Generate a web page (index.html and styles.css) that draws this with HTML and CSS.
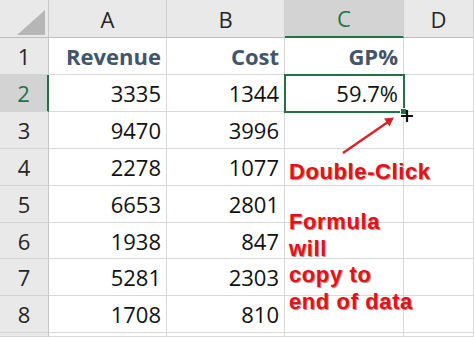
FILE: index.html
```html
<!DOCTYPE html>
<html>
<head>
<meta charset="utf-8">
<link rel="stylesheet" href="styles.css">
</head>
<body>
<div class="sheet">
  <div class="grid">
    <div class="corner"><svg class="tri" width="49" height="38" viewBox="0 0 49 38"><polygon points="17,35 45,35 45,10" fill="#b6b6b6"/></svg></div>
    <div class="colhead">A</div>
    <div class="colhead">B</div>
    <div class="colhead sel">C</div>
    <div class="colhead">D</div>

    <div class="rowhead">1</div>
    <div class="cell title">Revenue</div>
    <div class="cell title">Cost</div>
    <div class="cell title">GP%</div>
    <div class="cell"></div>

    <div class="rowhead sel">2</div>
    <div class="cell">3335</div>
    <div class="cell">1344</div>
    <div class="cell active">59.7%<span class="handle"></span></div>
    <div class="cell"></div>

    <div class="rowhead">3</div>
    <div class="cell">9470</div>
    <div class="cell">3996</div>
    <div class="cell"></div>
    <div class="cell"></div>

    <div class="rowhead">4</div>
    <div class="cell">2278</div>
    <div class="cell">1077</div>
    <div class="cell"></div>
    <div class="cell"></div>

    <div class="rowhead">5</div>
    <div class="cell">6653</div>
    <div class="cell">2801</div>
    <div class="cell"></div>
    <div class="cell"></div>

    <div class="rowhead">6</div>
    <div class="cell">1938</div>
    <div class="cell">847</div>
    <div class="cell"></div>
    <div class="cell"></div>

    <div class="rowhead">7</div>
    <div class="cell">5281</div>
    <div class="cell">2303</div>
    <div class="cell"></div>
    <div class="cell"></div>

    <div class="rowhead">8</div>
    <div class="cell">1708</div>
    <div class="cell">810</div>
    <div class="cell"></div>
    <div class="cell"></div>

    <div class="rowhead"></div>
    <div class="cell"></div>
    <div class="cell"></div>
    <div class="cell"></div>
    <div class="cell"></div>
  </div>

  <svg class="plus" width="12" height="12" viewBox="0 0 12 12"><path d="M6 0V12M0 6H12" stroke="#111" stroke-width="2.2"/></svg>
  <svg class="arrow" width="474" height="337" viewBox="0 0 474 337"><line x1="343" y1="153" x2="388" y2="122" stroke="#d8222a" stroke-width="2.4"/><polygon points="394,117.5 384,118.5 389.5,126.5" fill="#d8222a"/></svg>
  <div class="note note1">Double-Click</div>
  <div class="note note2">Formula<br>will<br>copy to<br>end of data</div>
</div>
</body>
</html>
```

FILE: styles.css
```css
html, body {
  margin: 0;
  padding: 0;
  background: #ffffff;
}

.sheet {
  position: relative;
  width: 474px;
  height: 337px;
  overflow: hidden;
  font-family: "Open Sans", "Liberation Sans", sans-serif;
  font-size: 22px;
  color: #111;
}

.grid {
  display: grid;
  grid-template-columns: 49px 118px 118px 119px 1fr;
  grid-template-rows: 38px 37px 37px 37px 37px 37px 36px 37px 37px 1fr;
  height: 337px;
}

.corner {
  background: #e9e9e9;
  border-right: 1px solid #c9c9c9;
  border-bottom: 1px solid #bdbdbd;
  box-sizing: border-box;
  position: relative;
}

.tri {
  position: absolute;
  left: 0;
  top: 0;
}

.colhead {
  background: #e9e9e9;
  border-right: 1px solid #d0d0d0;
  border-bottom: 1px solid #bdbdbd;
  box-sizing: border-box;
  display: flex;
  align-items: center;
  justify-content: center;
  color: #262626;
}

.colhead.sel {
  background: #d3d3d3;
  color: #217346;
  border-bottom: 2px solid #217346;
}

.rowhead {
  background: #e9e9e9;
  border-right: 1px solid #c6c6c6;
  border-bottom: 1px solid #d4d4d4;
  box-sizing: border-box;
  display: flex;
  align-items: center;
  justify-content: center;
  color: #262626;
}

.rowhead.sel {
  background: #d3d3d3;
  color: #217346;
  border-right: 2px solid #217346;
}

.cell {
  border-right: 1px solid #d9d9d9;
  border-bottom: 1px solid #d9d9d9;
  box-sizing: border-box;
  display: flex;
  align-items: center;
  justify-content: flex-end;
  padding-right: 5px;
  position: relative;
}

.cell.title {
  font-weight: 700;
  color: #44546a;
}

.cell.active {
  outline: 2px solid #217346;
  outline-offset: -1px;
  z-index: 1;
}

.handle {
  position: absolute;
  right: -4px;
  bottom: -4px;
  width: 5px;
  height: 5px;
  background: #217346;
  border: 1px solid #ffffff;
}

.plus {
  position: absolute;
  left: 401px;
  top: 110px;
  z-index: 2;
}

.arrow {
  position: absolute;
  left: 0;
  top: 0;
  z-index: 2;
}

.note {
  position: absolute;
  left: 289px;
  font-family: "Liberation Sans", Arial, sans-serif;
  font-weight: 700;
  font-size: 22px;
  line-height: 26.7px;
  letter-spacing: 0.6px;
  color: #e0131c;
  text-shadow: 1px 1px 1px rgba(90, 0, 0, 0.5);
  white-space: nowrap;
  z-index: 2;
}

.note1 {
  top: 159px;
}

.note2 {
  top: 209px;
}
```
